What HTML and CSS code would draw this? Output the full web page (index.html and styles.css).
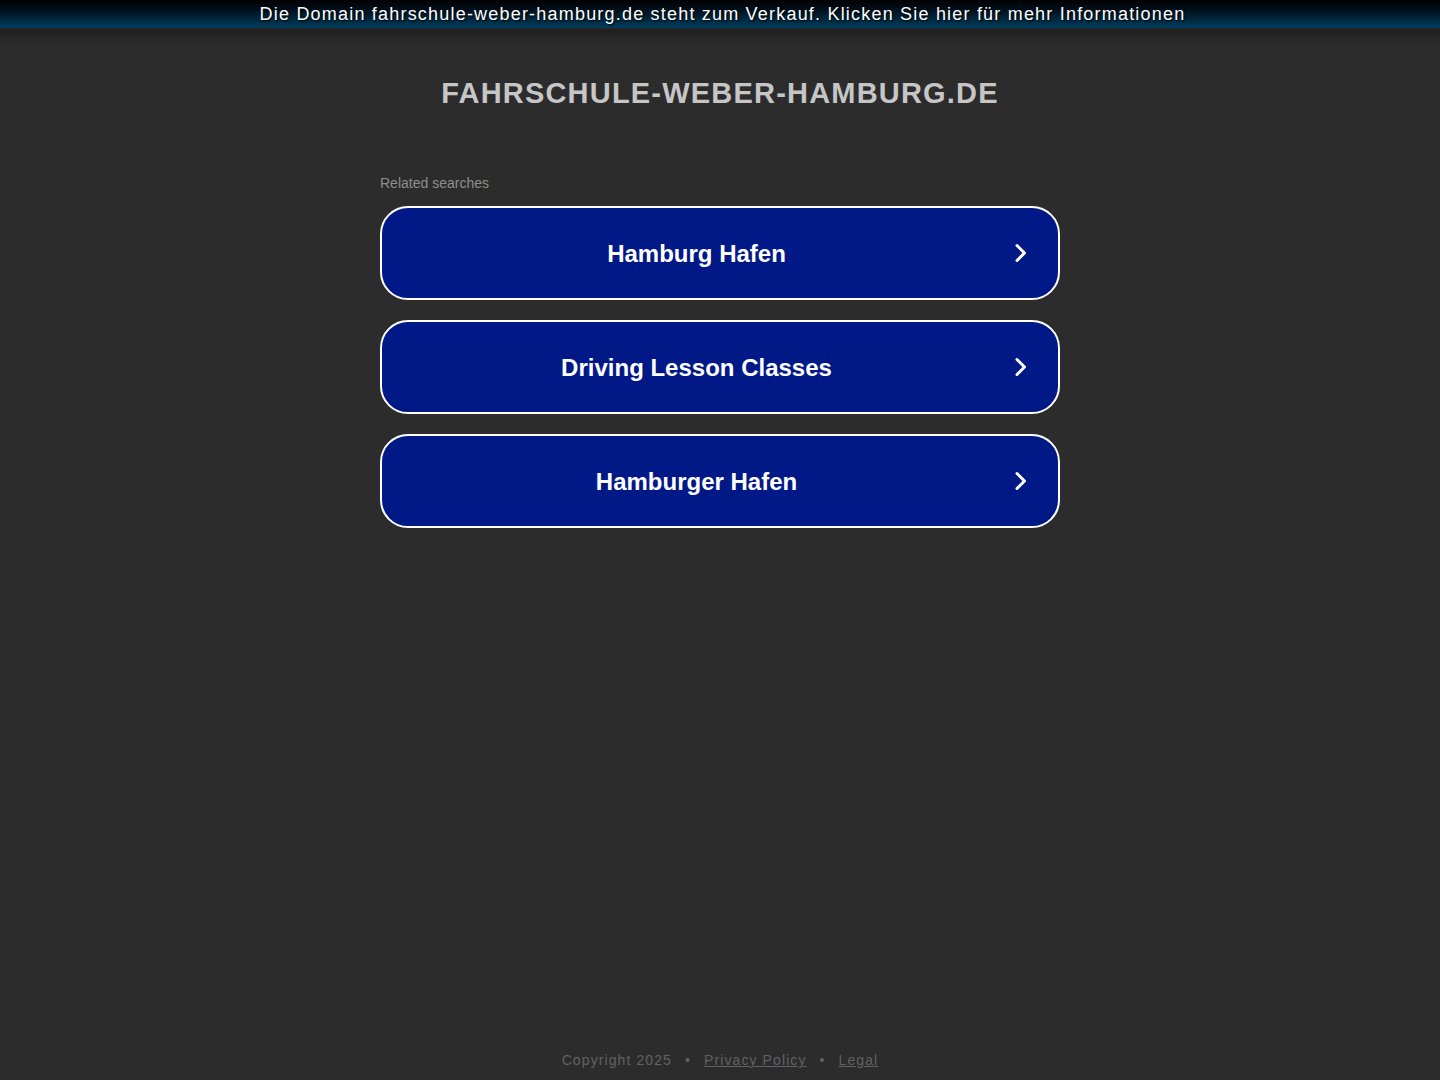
FILE: index.html
```html
<!DOCTYPE html>
<html lang="de">
<head>
<meta charset="utf-8">
<title>fahrschule-weber-hamburg.de</title>
<link rel="stylesheet" href="styles.css">
</head>
<body>
<div class="topbar"><a href="#">Die Domain fahrschule-weber-hamburg.de steht zum Verkauf. Klicken Sie hier für mehr Informationen</a></div>
<div class="page">
  <h1 class="domain">FAHRSCHULE-WEBER-HAMBURG.DE</h1>
  <div class="related">
    <div class="related-title">Related searches</div>
    <a class="card" href="#"><span class="card-text">Hamburg Hafen</span><svg class="chev" viewBox="0 0 24 24" width="24" height="24"><path d="M8 4.5 L15.5 12 L8 19.5" fill="none" stroke="#fff" stroke-width="3" stroke-linecap="round" stroke-linejoin="round"/></svg></a>
    <a class="card" href="#"><span class="card-text">Driving Lesson Classes</span><svg class="chev" viewBox="0 0 24 24" width="24" height="24"><path d="M8 4.5 L15.5 12 L8 19.5" fill="none" stroke="#fff" stroke-width="3" stroke-linecap="round" stroke-linejoin="round"/></svg></a>
    <a class="card" href="#"><span class="card-text">Hamburger Hafen</span><svg class="chev" viewBox="0 0 24 24" width="24" height="24"><path d="M8 4.5 L15.5 12 L8 19.5" fill="none" stroke="#fff" stroke-width="3" stroke-linecap="round" stroke-linejoin="round"/></svg></a>
  </div>
  <div class="spacer"></div>
  <footer class="footer">
    <span>Copyright 2025</span><span class="dot">•</span><a href="#">Privacy Policy</a><span class="dot">•</span><a href="#">Legal</a>
  </footer>
</div>
</body>
</html>
```
FILE: styles.css
```css
html, body {
  margin: 0;
  padding: 0;
  height: 100%;
}
body {
  background: #2c2c2c;
  font-family: "Liberation Sans", Arial, sans-serif;
  display: flex;
  flex-direction: column;
}
.topbar {
  height: 28px;
  background: linear-gradient(to bottom, #000000 0%, #01101c 35%, #003d5e 100%);
  border-bottom: 2px solid #242424;
  text-align: center;
  line-height: 28px;
  flex-shrink: 0;
}
.topbar a {
  display: inline-block;
  padding-left: 5px;
  color: #fff;
  text-decoration: none;
  font-size: 18px;
  letter-spacing: 1.2px;
  text-shadow: 1px 1px 2px #000;
}
.page {
  flex: 1;
  display: flex;
  flex-direction: column;
  align-items: center;
  background: linear-gradient(to bottom, #1f1f1f 0px, #2c2c2c 14px);
}
.domain {
  margin: 46px 0 0;
  font-size: 29px;
  font-weight: bold;
  letter-spacing: 1.2px;
  color: #c6c6c6;
  line-height: 34px;
}
.related {
  width: 680px;
  margin-top: 65px;
  display: flex;
  flex-direction: column;
  gap: 20px;
}
.related-title {
  font-size: 14px;
  color: #8e8e8e;
  line-height: 16px;
  margin-bottom: -5px;
}
.card {
  height: 90px;
  border: 2px solid #fff;
  border-radius: 28px;
  background: #011887;
  display: flex;
  align-items: center;
  text-decoration: none;
  position: relative;
}
.card-text {
  flex: 1;
  text-align: center;
  color: #fff;
  font-size: 24px;
  font-weight: bold;
  padding-left: 20px;
  padding-top: 2px;
}
.chev {
  margin: 0 25px 0 18px;
  flex-shrink: 0;
}
.spacer {
  flex: 1;
}
.footer {
  font-size: 14px;
  color: #626262;
  letter-spacing: 1.1px;
  padding-bottom: 12px;
  line-height: 16px;
  display: flex;
  gap: 0;
}
.footer a {
  color: #626262;
}
.dot {
  margin: 0 13px;
}
```
